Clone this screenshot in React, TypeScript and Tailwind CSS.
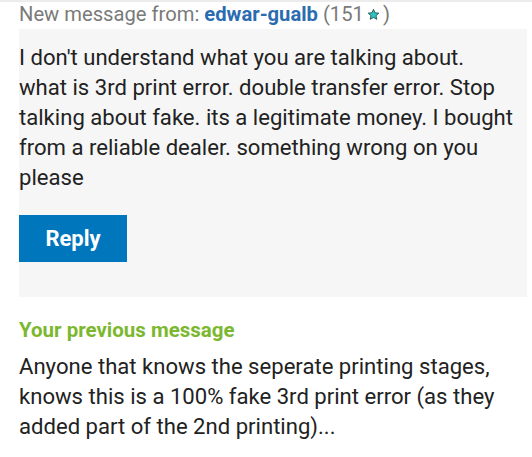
const Star = () => (
    <svg width="13" height="13" viewBox="0 0 24 24" className="inline-block mx-[3px] -mt-[2px]">
        <path
            d="M12 2.5l2.9 6.3 6.9.7-5.2 4.6 1.5 6.8L12 17.4l-6.1 3.5 1.5-6.8-5.2-4.6 6.9-.7z"
            fill="#2ec4c0"
            stroke="#1d4e4c"
            strokeWidth="1.6"
            strokeLinejoin="round"
        />
    </svg>
);

export default function App() {
    return (
        <div className="w-[532px] h-[457px] bg-white font-['Roboto',sans-serif] overflow-hidden">
            {/* top shadow + header line */}
            <div className="border-t-2 border-[#ececec] pl-[19px] h-[29px] text-[20.2px] leading-[24px] text-[#7a7a7a]">
                New message from: <span className="font-bold text-[#2b6cb0]">edwar-gualb</span> (151
                <Star />)
            </div>

            {/* message panel */}
            <div className="ml-[19px] mr-[5px] bg-[#f6f6f6] pt-[13px] pb-[35px]">
                <p className="text-[22.1px] leading-[30px] text-[#222] whitespace-nowrap">
                    I don't understand what you are talking about.
                    <br />
                    what is 3rd print error. double transfer error. Stop
                    <br />
                    talking about fake. its a legitimate money. I bought
                    <br />
                    from a reliable dealer. something wrong on you
                    <br />
                    please
                </p>
                <button className="mt-[23px] w-[108px] h-[47px] bg-[#0076bd] text-white font-bold text-[22px]">
                    Reply
                </button>
            </div>

            {/* previous message */}
            <div className="px-[19px] pt-[19px]">
                <div className="text-[20.5px] leading-[28px] font-bold text-[#7cb82f]">Your previous message</div>
                <p className="mt-[7px] text-[22.1px] leading-[30px] text-[#222] whitespace-nowrap">
                    Anyone that knows the seperate printing stages,
                    <br />
                    knows this is a 100% fake 3rd print error (as they
                    <br />
                    added part of the 2nd printing)...
                </p>
            </div>
        </div>
    );
}
